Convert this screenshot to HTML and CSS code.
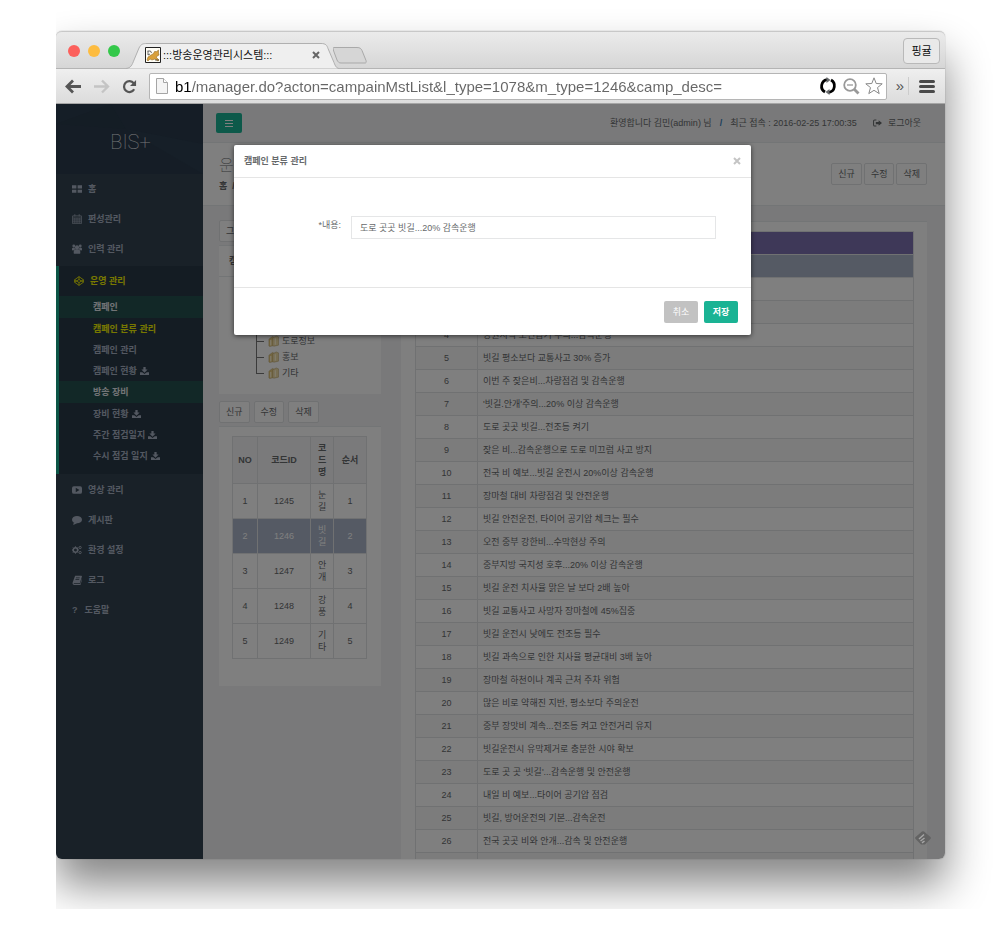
FILE: index.html
```html
<!DOCTYPE html>
<html lang="ko">
<head>
<meta charset="utf-8">
<meta name="viewport" content="width=device-width, initial-scale=1">
<title>:::방송운영관리시스템:::</title>
<link rel="stylesheet" href="styles.css">
</head>
<body>
<svg class="defs" aria-hidden="true">
  <symbol id="i-download" viewBox="0 0 16 14"><path d="M6 0h4v4.500h3.500L8 10 2.500 4.500H6z"/><path d="M0 9h4l4 3.500L12 9h4v5H0z"/></symbol>
  <symbol id="i-folder" viewBox="0 0 12 12"><path d="M1 4l4-3 1 .5v9.500L2 12l-1-.5z" fill="#e6cb80" stroke="#b39a5c" stroke-width=".5"/><path d="M5 2.500l4-2 2.500 1v9l-5 1.200L5 11z" fill="#efdca6" stroke="#b39a5c" stroke-width=".5"/><path d="M3 5v6M8 3v7" stroke="#fff6d8" stroke-width="1.300"/></symbol>
</svg>
<div class="stage">
  <div class="window">
    <header class="tabstrip">
      <div class="lights"><i class="red"></i><i class="amber"></i><i class="green"></i></div>
      <div class="tab">
        <svg class="tab-shape" viewBox="0 0 213 26" preserveAspectRatio="none"><path d="M0 25.500C5 25 6 22 8 17l5-12C15 1 17 .5 21 .5h174c5 0 6 2 7 5l6 14c1.500 4 2.500 5.500 5 6z" fill="#efefef"/><path d="M0 25.500C5 25 6 22 8 17l5-12C15 1 17 .5 21 .5h174c5 0 6 2 7 5l6 14c1.500 4 2.500 5.500 5 6" fill="none" stroke="#b0b0b0"/></svg>
        <svg class="favicon" viewBox="0 0 16 16"><path d="M.5.5h15v15H.5z" fill="#fffdf5" stroke="#222"/><path d="M2 13l1-3 3-2 2-1 2-3 1 1 2.500-2v3l.5 2-3 2 3 3-1 1-3-2-3 1-2-1-2 2z" fill="#d9a03a" stroke="#8a6018" stroke-width=".5"/><path d="M2.500 4h3l1 2M3 4v4l2-1M10 13h4" stroke="#444" fill="none" stroke-width=".8"/></svg>
        <span class="tab-title">:::방송운영관리시스템:::</span>
        <button class="tab-close" aria-label="탭 닫기"><svg viewBox="0 0 8 8"><path d="M1 1l6 6M7 1L1 7"/></svg></button>
      </div>
      <button class="newtab" aria-label="새 탭"><svg viewBox="0 0 34 17"><path d="M1 .5h23c3 0 4 1 5 3l4 10c.5 2 0 2.500-1 2.500H8c-2 0-3-1-4-3L1 5C0 2-.5.5 1 .5z" fill="#d6d6d6" stroke="#a9a9a9"/></svg></button>
      <button class="profile">핑귤</button>
    </header>
    <div class="toolbar">
      <button class="tool" aria-label="뒤로"><svg viewBox="0 0 17 14"><path d="M16 7H3M8 1L2 7l6 6" fill="none" stroke="#555" stroke-width="2.800"/></svg></button>
      <button class="tool" aria-label="앞으로"><svg viewBox="0 0 17 14"><path d="M1 7h13M9 1l6 6-6 6" fill="none" stroke="#c4c4c4" stroke-width="2.400"/></svg></button>
      <button class="tool" aria-label="새로고침"><svg viewBox="0 0 17 16"><path d="M13.500 11A5.800 5.800 0 1 1 13 4.500" fill="none" stroke="#555" stroke-width="2.400"/><path d="M15.500 1v6.500H9z" fill="#555"/></svg></button>
      <div class="omnibox">
        <svg class="page-icon" viewBox="0 0 12 16"><path d="M.5.5h7l4 4v11H.5z" fill="#f4f4f4" stroke="#a5a5a5"/><path d="M7.500.5v4h4" fill="#fff" stroke="#a5a5a5"/></svg>
        <input class="url" type="text" aria-label="주소" value="b1/manager.do?acton=campainMstList&amp;l_type=1078&amp;m_type=1246&amp;camp_desc=">
        <svg class="omni-icon" viewBox="0 0 18 18"><path d="M6 15A6.700 6.700 0 0 1 8 2.600M12 3A6.700 6.700 0 0 1 10 15.400" fill="none" stroke="#000" stroke-width="2.800"/><path d="M7.500 0l4 3-4 3zM10.500 18l-4-3 4-3z"/></svg>
        <svg class="omni-icon" viewBox="0 0 18 18"><circle cx="8" cy="8" r="5.800" fill="none" stroke="#999" stroke-width="1.800"/><path d="M5 8h6" stroke="#999" stroke-width="1.300"/><path d="M12 12l4.500 4.500" stroke="#999" stroke-width="2.800"/></svg>
        <svg class="omni-icon" viewBox="0 0 18 18"><path d="M9 .8l2.200 5.700 6 .3-4.700 3.800 1.700 6L9 13.300l-5.200 3.300 1.700-6L.8 6.800l6-.3z" fill="#fff" stroke="#888"/></svg>
      </div>
      <button class="more" aria-label="더보기">»</button>
      <button class="menu" aria-label="메뉴"><svg viewBox="0 0 16 13"><path d="M1.500 1.500h13M1.500 6.500h13M1.500 11.500h13" stroke="#4a4a4a" stroke-width="3" stroke-linecap="round"/></svg></button>
    </div>

    <div class="page">
      <aside class="sidebar">
        <div class="brand"><svg class="facets" viewBox="0 0 147 70" preserveAspectRatio="none"><path d="M0 20l55-20H0z" fill="#2b3c4e"/><path d="M0 20L70 25 55 0z" fill="#293a4b"/><path d="M70 25l77 15V0H55z" fill="#2a3b4d"/><path d="M70 25l77 45V40z" fill="#2c3e50"/></svg><span class="brand-name">BIS+</span></div>
        <nav class="nav">
          <a class="item" href="#"><svg viewBox="0 0 16 16"><path d="M0 2h7v5H0zM9 2h7v5H9zM0 9h7v5H0zM9 9h7v5H9z"/></svg>홈</a>
          <a class="item" href="#"><svg viewBox="0 0 16 16"><path d="M1 3h14v12.500H1z" fill="none" stroke="currentColor" stroke-width="1.200"/><path d="M1 6.500h14M1 9.500h14M1 12.500h14M4.500 6v9M8 6v9M11.500 6v9M4.500 0v4M11.500 0v4" stroke="currentColor"/></svg>편성관리</a>
          <a class="item" href="#"><svg viewBox="0 0 16 16"><circle cx="8" cy="5.500" r="3.400"/><circle cx="2.800" cy="3" r="2.200"/><circle cx="13.200" cy="3" r="2.200"/><path d="M3 15.500c-1.500-6 2-7 5-7s6.500 1 5 7zM0 10c-.5-4 1-4.500 4-4.500l1 3-3 2zM16 10c.5-4-1-4.500-4-4.500l-1 3 3 2z"/></svg>인력 관리</a>
          <div class="group">
            <a class="item current" href="#"><svg viewBox="0 0 16 16"><path d="M8 1l7 5v4l-7 5-7-5V6zM8 1v4.500M8 10.500V15M1 6l7 4.500L15 6M1 10l7-4.500 7 4.500" fill="none" stroke="currentColor" stroke-width="1.400"/></svg>운영 관리</a>
            <a class="sub section" href="#">캠페인</a>
            <a class="sub current" href="#">캠페인 분류 관리</a>
            <a class="sub" href="#">캠페인 관리</a>
            <a class="sub" href="#">캠페인 현황 <svg><use href="#i-download"/></svg></a>
            <a class="sub section" href="#">방송 장비</a>
            <a class="sub" href="#">장비 현황 <svg><use href="#i-download"/></svg></a>
            <a class="sub" href="#">주간 점검일지 <svg><use href="#i-download"/></svg></a>
            <a class="sub" href="#">수시 점검 일지 <svg><use href="#i-download"/></svg></a>
          </div>
          <a class="item" href="#"><svg viewBox="0 0 16 16"><path fill-rule="evenodd" d="M3 2h10q3 0 3 3v6q0 3-3 3H3q-3 0-3-3V5q0-3 3-3zM6 4.500v7L12 8z"/></svg>영상 관리</a>
          <a class="item" href="#"><svg viewBox="0 0 16 16"><ellipse cx="8" cy="7.500" rx="8" ry="5.800"/><path d="M3 11l-1 5 6-3z"/></svg>게시판</a>
          <a class="item" href="#"><svg viewBox="0 0 16 16"><circle cx="5.500" cy="8" r="3.600" fill="none" stroke="currentColor" stroke-width="2.400"/><path d="M5.500 2v2M5.500 12v2M0 8h2M9 8h2M1.500 4l1.500 1.500M8 10.500L9.500 12M9.500 4L8 5.500M3 10.500L1.500 12" stroke="currentColor" stroke-width="1.500"/><circle cx="13" cy="4" r="1.800" fill="none" stroke="currentColor" stroke-width="1.500"/><circle cx="13" cy="12" r="1.800" fill="none" stroke="currentColor" stroke-width="1.500"/></svg>환경 설정</a>
          <a class="item" href="#"><svg viewBox="0 0 16 16"><path fill-rule="evenodd" d="M5 1h10l1 1-3.500 11H3q-1 1 .5 1.500H13l3-9v2L13.500 16H3q-3-1-2-4zM6.500 4l-.4 1.200h6L12.500 4zM5.700 6.700L5.300 8h6l.4-1.300z"/></svg>로그</a>
          <a class="item" href="#"><b class="q">?</b>도움말</a>
        </nav>
      </aside>

      <main class="main">
        <div class="topnav">
          <button class="burger" aria-label="메뉴 접기"><svg viewBox="0 0 8 7"><path d="M0 .5h8M0 3.500h8M0 6.500h8" stroke="#fff"/></svg></button>
          <div class="account"><span>환영합니다 김민(admin) 님</span><span class="slash">/</span><span>최근 접속 : 2016-02-25 17:00:35</span><a class="logout" href="#"><svg viewBox="0 0 16 14"><path d="M6 1.500H3Q1 1.500 1 4v6q0 2.500 2 2.500h3" fill="none" stroke="currentColor" stroke-width="1.800"/><path d="M5 5h5V2l6 5-6 5V9H5z"/></svg>로그아웃</a></div>
        </div>
        <div class="heading">
          <div><h1>운</h1><p class="crumbs">홈 &nbsp;/</p></div>
          <div class="buttons tight"><button class="btn">신규</button><button class="btn">수정</button><button class="btn">삭제</button></div>
        </div>
        <div class="content">
          <div class="left">
            <div class="buttons"><button class="btn">그룹관리</button></div>
            <section class="panel">
              <h2>캠페인 분류</h2>
              <ul class="tree"><li><svg><use href="#i-folder"/></svg>기상</li><li><svg><use href="#i-folder"/></svg>안전</li><li><svg><use href="#i-folder"/></svg>교통</li><li><svg><use href="#i-folder"/></svg>도로정보</li><li><svg><use href="#i-folder"/></svg>홍보</li><li><svg><use href="#i-folder"/></svg>기타</li></ul>
            </section>
            <div class="buttons second"><button class="btn">신규</button><button class="btn">수정</button><button class="btn">삭제</button></div>
            <section class="panel codes">
              <table class="grid code-table">
                <colgroup><col class="c-no"><col class="c-id"><col class="c-name"><col class="c-order"></colgroup>
                <thead><tr><th>NO</th><th>코드ID</th><th>코드명</th><th>순서</th></tr></thead>
                <tbody>
                  <tr><td>1</td><td>1245</td><td>눈길</td><td>1</td></tr>
                  <tr class="selected"><td>2</td><td>1246</td><td>빗길</td><td>2</td></tr>
                  <tr><td>3</td><td>1247</td><td>안개</td><td>3</td></tr>
                  <tr><td>4</td><td>1248</td><td>강풍</td><td>4</td></tr>
                  <tr><td>5</td><td>1249</td><td>기타</td><td>5</td></tr>
                </tbody>
              </table>
            </section>
          </div>
          <section class="panel list">
            <table class="grid list-table">
              <colgroup><col class="l-no"><col></colgroup>
              <thead><tr><th>NO</th><th>내용</th></tr></thead>
              <tbody>
                <tr class="selected"><td>1</td><td>도로 곳곳 빗길...20% 감속운행</td></tr>
                <tr><td>2</td><td>빗길 안전운행</td></tr>
                <tr><td>3</td><td>빗길 감속운행</td></tr>
                <tr><td>4</td><td>강원지역 노면습기 주의...감속운행</td></tr>
                <tr><td>5</td><td>빗길 평소보다 교통사고 30% 증가</td></tr>
                <tr><td>6</td><td>이번 주 잦은비...차량점검 및 감속운행</td></tr>
                <tr><td>7</td><td>'빗길.안개'주의...20% 이상 감속운행</td></tr>
                <tr><td>8</td><td>도로 곳곳 빗길...전조등 켜기</td></tr>
                <tr><td>9</td><td>잦은 비...감속운행으로 도로 미끄럼 사고 방지</td></tr>
                <tr><td>10</td><td>전국 비 예보...빗길 운전시 20%이상 감속운행</td></tr>
                <tr><td>11</td><td>장마철 대비 차량점검 및 안전운행</td></tr>
                <tr><td>12</td><td>빗길 안전운전, 타이어 공기압 체크는 필수</td></tr>
                <tr><td>13</td><td>오전 중부 강한비...수막현상 주의</td></tr>
                <tr><td>14</td><td>중부지방 국지성 호후...20% 이상 감속운행</td></tr>
                <tr><td>15</td><td>빗길 운전 치사율 맑은 날 보다 2배 높아</td></tr>
                <tr><td>16</td><td>빗길 교통사고 사망자 장마철에 45%집중</td></tr>
                <tr><td>17</td><td>빗길 운전시 낮에도 전조등 필수</td></tr>
                <tr><td>18</td><td>빗길 과속으로 인한 치사율 평균대비 3배 높아</td></tr>
                <tr><td>19</td><td>장마철 하천이나 계곡 근처 주차 위험</td></tr>
                <tr><td>20</td><td>많은 비로 약해진 지반, 평소보다 주의운전</td></tr>
                <tr><td>21</td><td>중부 장맛비 계속...전조등 켜고 안전거리 유지</td></tr>
                <tr><td>22</td><td>빗길운전시 유막제거로 충분한 시야 확보</td></tr>
                <tr><td>23</td><td>도로 곳 곳 '빗길'...감속운행 및 안전운행</td></tr>
                <tr><td>24</td><td>내일 비 예보...타이어 공기압 점검</td></tr>
                <tr><td>25</td><td>빗길, 방어운전의 기본...감속운전</td></tr>
                <tr><td>26</td><td>전국 곳곳 비와 안개...감속 및 안전운행</td></tr>
                <tr><td></td><td></td></tr>
              </tbody>
            </table>
          </section>
        </div>
      </main>

      <div class="overlay">
        <form class="modal" role="dialog" aria-labelledby="modal-title">
          <div class="modal-head"><h2 id="modal-title">캠페인 분류 관리</h2><button type="button" class="close" aria-label="닫기"><svg viewBox="0 0 8 8"><path d="M1 1l6 6M7 1L1 7"/></svg></button></div>
          <div class="modal-body"><label for="desc">*내용:</label><input id="desc" type="text" value="도로 곳곳 빗길...20% 감속운행"></div>
          <div class="modal-foot"><button type="button" class="action cancel">취소</button><button type="submit" class="action save">저장</button></div>
        </form>
      </div>
      <svg class="badge" viewBox="0 0 16 14"><path d="M7 .6q1-.8 2 0l6.400 5.400q1 1 0 2L10 13.500H6L.6 8q-1-1 0-2z" fill="#636363"/><path d="M4 8L9 3.500M5.500 10L9.500 7M7 11.800L9.500 10" stroke="#a5a5a5" stroke-width="1.500"/></svg>
    </div>
  </div>
</div>
</body>
</html>
```
FILE: styles.css
```css
* { box-sizing: border-box; }
body {
  margin: 0;
  padding: 0 0 30px 56px;
  background: #fff;
  color: #676a6c;
  font: 9px/12px "Liberation Sans", "Noto Sans CJK KR", sans-serif;
}
h1, h2, p, ul { margin: 0; padding: 0; }
a { color: inherit; text-decoration: none; }
button, input { font: inherit; color: inherit; }
button { padding: 0; border: 0; background: none; }
svg { display: block; fill: currentColor; flex: none; }
.defs { position: absolute; width: 0; height: 0; }

.stage {
  display: flex;
  height: calc(100vh - 30px);
  overflow: hidden;
  padding: 31px 55px 50px 0;
}
.window {
  flex: 1;
  min-width: 0;
  display: flex;
  flex-direction: column;
  border-radius: 6px;
  box-shadow: 0 26px 44px rgba(0, 0, 0, .48), 0 0 1px rgba(0, 0, 0, .5);
}

/* Browser chrome */
.tabstrip {
  display: flex;
  align-items: flex-end;
  height: 38px;
  padding-left: 12px;
  border-top: 1px solid #c8c8c8;
  border-bottom: 1px solid #b4b4b4;
  border-radius: 6px 6px 0 0;
  background: linear-gradient(#ebebeb, #d6d6d6);
}
.lights { display: flex; gap: 8px; padding-bottom: 11px; }
.lights i { width: 12px; height: 12px; border-radius: 50%; }
.red { background: #fc605c; }
.amber { background: #fdbc40; }
.green { background: #34c84a; }
.tab {
  position: relative;
  display: flex;
  align-items: center;
  gap: 2px;
  width: 213px;
  height: 26px;
  margin: 0 -6px -1px 6px;
  padding: 0 19px 2px 19px;
}
.tab-shape { position: absolute; inset: 0; width: 100%; height: 100%; }
.favicon { position: relative; width: 16px; height: 16px; }
.tab-title { position: relative; flex: 1; font-size: 11px; color: #111; white-space: nowrap; }
.tab-close { position: relative; }
.tab-close svg, .close svg { width: 8px; height: 8px; stroke: #666; stroke-width: 2; }
.newtab { margin-bottom: 4px; }
.newtab svg { width: 34px; height: 17px; }
.profile {
  width: 37px;
  height: 26px;
  margin: 0 5px 4px auto;
  border: 1px solid #b9b9b9;
  border-radius: 4px;
  background: #e9e9e9;
  color: #111;
  font-size: 11px;
}
.toolbar {
  display: flex;
  align-items: center;
  height: 35px;
  padding: 0 10px 0 9px;
  border-bottom: 1px solid #a5a5a5;
  background: linear-gradient(#efefef, #dcdcdc);
}
.tool { margin-right: 11px; }
.tool svg { width: 17px; height: 15px; }
.omnibox {
  flex: 1;
  min-width: 0;
  display: flex;
  align-items: center;
  gap: 5px;
  height: 27px;
  padding: 0 3px 0 6px;
  border: 1px solid #b5b5b5;
  border-radius: 2px;
  background: #fff;
}
.page-icon { width: 12px; height: 16px; }
.url {
  flex: 1;
  min-width: 0;
  padding: 0 0 0 2px;
  border: 0;
  font-size: 15px;
  color: transparent;
  background: linear-gradient(90deg, #000 19px, #666 19px) text;
}
.omni-icon { width: 18px; height: 18px; }
.more { width: 22px; padding-left: 5px; border-right: 1px solid #ccc; font-size: 15px; line-height: 18px; color: #555; }
.menu { margin-left: 10px; }
.menu svg { width: 16px; height: 13px; }

/* Application page */
.page {
  position: relative;
  flex: 1;
  min-height: 0;
  display: flex;
  overflow: hidden;
  border-radius: 0 0 6px 6px;
  background: #f3f3f4;
}
.sidebar { flex: none; width: 147px; background: #334350; color: #a7b1c2; font-weight: bold; }
.brand { position: relative; display: grid; place-items: center; height: 70px; background: #2a3b4c; }
.facets { position: absolute; inset: 0; width: 100%; height: 100%; }
.brand-name { position: relative; padding: 5px 0 0 2px; font: 100 20px/24px Roboto, sans-serif; color: #e8eaec; }
.item { display: flex; align-items: center; gap: 6px; height: 30px; padding-left: 16px; }
.item svg { width: 10px; height: 10px; }
.q { padding-right: 1px; }
.group { margin: 2px 0 1px; padding-bottom: 8px; border-left: 3px solid #19aa8d; background: #293846; }
.group .item { padding-left: 15px; }
.sub { display: flex; align-items: center; gap: 3px; height: 21px; padding-left: 34px; }
.sub svg { width: 9px; height: 8px; }
.section { height: 22px; background: #24504f; color: #e4e8ec; }
.group .current { color: #f0f000; }

.main { flex: 1; min-width: 0; }
.topnav { display: flex; align-items: center; justify-content: space-between; height: 39px; padding: 0 24px 0 13px; border-bottom: 1px solid #e7eaec; }
.burger { display: grid; place-items: center; width: 26px; height: 20px; border-radius: 2px; background: #1ab394; }
.burger svg { width: 8px; height: 7px; }
.account { display: flex; align-items: center; gap: 8px; white-space: nowrap; }
.slash { color: #337ab7; font-weight: bold; }
.logout { display: flex; align-items: center; gap: 6px; padding-left: 8px; }
.logout svg { width: 9px; height: 8px; }
.heading { display: flex; justify-content: space-between; align-items: center; height: 63px; padding: 0 18px 0 16px; border-bottom: 1px solid #e7eaec; background: #fff; }
h1 { font: 100 16px/20px "Liberation Sans", "Noto Sans CJK KR", sans-serif; }
.crumbs { padding-top: 4px; font-weight: bold; }
.buttons { display: flex; gap: 4px; }
.buttons.tight { gap: 2px; }
.btn { height: 22px; padding: 0 6px; border: 1px solid #e0e2e4; border-radius: 2px; background: #fff; white-space: nowrap; }

.content { display: flex; align-items: flex-start; gap: 20px; padding: 15px 18px 20px 16px; }
.left { flex: none; width: 162px; }
.left .buttons { margin-top: -1px; }
.panel { border-top: 1px solid #e7eaec; background: #fff; }
.left .panel { margin-top: 3px; }
.panel h2 { padding: 9px 10px; border-bottom: 1px solid #e7eaec; font-size: 9px; line-height: 12px; }
.tree { padding: 8px 37px 13px; list-style: none; }
.tree li {
  display: flex;
  align-items: center;
  gap: 3px;
  height: 16px;
  padding-left: 12px;
  background:
    linear-gradient(#777, #777) 0 50% / 8px 1px no-repeat,
    linear-gradient(#777, #777) 0 0 / 1px 100% no-repeat;
}
.tree li:last-child { background-size: 8px 1px, 1px 8px; }
.tree svg { width: 11px; height: 12px; }
.left .second { margin-top: 7px; }
.codes { padding: 9px 14px 27px 13px; }
.list { flex: 1; min-width: 0; padding: 9px 13px 20px 14px; }
.grid { width: 100%; border-collapse: collapse; table-layout: fixed; text-align: center; }
.grid th, .grid td { border: 1px solid #e0e2e4; padding: 5px; }
.code-table th { background: #f5f5f6; padding: 5px 0; }
.code-table th, .code-table td { overflow-wrap: anywhere; height: 35px; }
.code-table th:nth-child(3) { height: 47px; padding: 5px 7px; }
.code-table td:nth-child(3) { padding: 5px 7px; }
.c-no { width: 25px; }
.c-id { width: 53px; }
.c-name { width: 23px; }
.l-no { width: 62px; }
.list-table th { background: #7c70b0; color: #fff; }
.list-table td:last-child { text-align: left; }
.list-table th, .list-table td { height: 23px; }
.list-table tbody tr:nth-child(odd) { background: #f9f9f9; }
.grid tbody tr.selected { background: #aab4c8; color: #fff; }

.badge { position: absolute; right: 14px; bottom: 14px; width: 16px; height: 14px; }

/* Dialog */
.overlay { position: absolute; inset: 0; padding: 41px 16px 0 0; background: rgba(0, 0, 0, .5); }
.modal { width: 100%; max-width: 517px; margin: 0 auto; background: #fff; border-radius: 2px; box-shadow: 0 1px 5px rgba(0, 0, 0, .6); }
.modal-head { display: flex; align-items: center; justify-content: space-between; height: 33px; padding: 0 10px; border-bottom: 1px solid #e5e5e5; }
.modal-head h2 { font-size: 9px; line-height: 12px; }
.close svg { stroke: #c4c4c4; stroke-width: 2; }
.modal-body { display: grid; grid-template-columns: 87px 1fr; gap: 10px; padding: 38px 35px 48px 20px; }
.modal-body label { padding-top: 3px; text-align: right; }
.modal-body input { min-width: 0; height: 23px; padding: 0 8px; border: 1px solid #e5e6e7; background: #fff; }
.modal-foot { display: flex; justify-content: flex-end; gap: 6px; padding: 13px 13px 12px; border-top: 1px solid #e5e5e5; }
.action { width: 34px; height: 22px; border-radius: 2px; color: #fff; }
.cancel { background: #c2c2c2; }
.save { background: #1ab394; font-weight: bold; }
```
